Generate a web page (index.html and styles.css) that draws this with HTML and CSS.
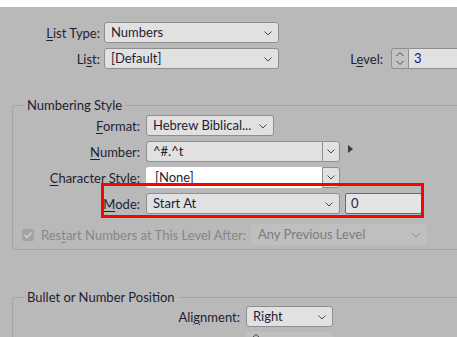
FILE: index.html
```html
<!DOCTYPE html>
<html lang="en">
<head>
  <meta charset="UTF-8">
  <title>Bullets and Numbering</title>
  <link rel="stylesheet" href="styles.css">
</head>
<body>
  <div class="topbar"></div>
  <div class="dialog">
    <div class="row first">
      <span class="lbl top-lbl"><u>L</u>ist Type:</span>
      <div class="select list-sel">Numbers
        <svg class="chev" width="8" height="5" viewBox="0 0 8 5"><polyline points="0.5,0.5 4,4 7.5,0.5"/></svg>
      </div>
    </div>
    <div class="row">
      <span class="lbl top-lbl">Li<u>s</u>t:</span>
      <div class="select list-sel">[Default]
        <svg class="chev" width="8" height="5" viewBox="0 0 8 5"><polyline points="0.5,0.5 4,4 7.5,0.5"/></svg>
      </div>
      <span class="lbl level-lbl">L<u>e</u>vel:</span>
      <div class="spin">
        <svg width="10" height="17" viewBox="0 0 10 17"><polyline points="1.5,6 5,2.5 8.5,6"/><polyline points="1.5,11 5,14.5 8.5,11"/></svg>
      </div>
      <div class="field level-field">3</div>
    </div>

    <fieldset class="group numbering">
      <legend>Numbering Style</legend>
      <div class="row">
        <span class="lbl ns-lbl"><u>F</u>ormat:</span>
        <div class="select format-sel">Hebrew Biblical...
          <svg class="chev" width="8" height="5" viewBox="0 0 8 5"><polyline points="0.5,0.5 4,4 7.5,0.5"/></svg>
        </div>
      </div>
      <div class="row">
        <span class="lbl ns-lbl"><u>N</u>umber:</span>
        <div class="combo">
          <div class="combo-text">^#.^t</div>
          <div class="combo-btn"><svg width="8" height="5" viewBox="0 0 8 5"><polyline points="0.5,0.5 4,4 7.5,0.5"/></svg></div>
        </div>
        <svg class="flyout" width="5" height="8" viewBox="0 0 5 8"><polygon points="0,0 5,4 0,8"/></svg>
      </div>
      <div class="row">
        <span class="lbl ns-lbl"><u>C</u>haracter Style:</span>
        <div class="combo">
          <div class="combo-text white">[None]</div>
          <div class="combo-btn"><svg width="8" height="5" viewBox="0 0 8 5"><polyline points="0.5,0.5 4,4 7.5,0.5"/></svg></div>
        </div>
      </div>
      <div class="row">
        <span class="lbl ns-lbl"><u>M</u>ode:</span>
        <div class="select mode-sel">Start At
          <svg class="chev" width="8" height="5" viewBox="0 0 8 5"><polyline points="0.5,0.5 4,4 7.5,0.5"/></svg>
        </div>
        <div class="field start-field">0</div>
      </div>
      <div class="row restart">
        <span class="check">
          <svg width="12" height="12" viewBox="0 0 12 12"><polyline points="2.5,6 5,8.5 9.5,3.5"/></svg>
        </span>
        <span class="dis-lbl">Res<u>t</u>art Numbers at This Level After:</span>
        <div class="select dis-sel">Any Previous Level
          <svg class="chev" width="8" height="5" viewBox="0 0 8 5"><polyline points="0.5,0.5 4,4 7.5,0.5"/></svg>
        </div>
      </div>
    </fieldset>

    <fieldset class="group position">
      <legend>Bullet or Number Position</legend>
      <div class="row">
        <span class="lbl pos-lbl">Ali<u>g</u>nment:</span>
        <div class="select align-sel">Right
          <svg class="chev" width="8" height="5" viewBox="0 0 8 5"><polyline points="0.5,0.5 4,4 7.5,0.5"/></svg>
        </div>
      </div>
      <div class="row cut">
        <span class="lbl pos-lbl"></span>
        <div class="dis-spin">
          <svg width="10" height="5" viewBox="0 0 10 5"><polyline points="2,4 5,1.5 8,4"/></svg>
        </div>
      </div>
    </fieldset>

    <div class="highlight"></div>
  </div>
</body>
</html>
```

FILE: styles.css
```css
html, body {
  margin: 0;
  padding: 0;
}
body {
  width: 457px;
  height: 337px;
  overflow: hidden;
  background: #b9b9b9;
  font-family: "Lato", "Liberation Sans", sans-serif;
  font-size: 13px;
  color: #1e1e32;
}
.topbar {
  height: 7px;
  background: #fff;
}
.dialog {
  position: relative;
  padding-top: 15px;
}
.row {
  display: flex;
  align-items: center;
  height: 21px;
  margin-top: 5px;
}
.row.first {
  margin-top: 0;
}
.lbl {
  text-align: right;
  white-space: nowrap;
  flex: none;
}
u {
  text-decoration-thickness: 1px;
  text-underline-offset: 2px;
}
.top-lbl {
  width: 100px;
  margin-right: 4px;
}
.level-lbl {
  width: 104px;
  margin-right: 8px;
}
.ns-lbl {
  width: 127px;
  margin-right: 6px;
}
.pos-lbl {
  width: 227px;
  margin-right: 6px;
}

.select {
  position: relative;
  box-sizing: border-box;
  height: 21px;
  line-height: 19px;
  padding-left: 6px;
  background: #e1e1e1;
  border: 1px solid #8f8f8f;
  border-radius: 3px;
  white-space: nowrap;
  overflow: hidden;
  flex: none;
}
.chev {
  position: absolute;
  right: 6px;
  top: 8px;
}
.chev polyline, .combo-btn polyline, .spin polyline, .dis-spin polyline {
  fill: none;
  stroke: #4a4a4a;
  stroke-width: 1;
}
.list-sel { width: 175px; }
.format-sel { width: 128px; }
.mode-sel { width: 194px; }
.align-sel { width: 87px; }

.spin {
  box-sizing: border-box;
  width: 18px;
  height: 21px;
  border: 1px solid #8f8f8f;
  border-radius: 3px 0 0 3px;
  background: #c4c4c4;
  display: flex;
  align-items: center;
  justify-content: center;
  flex: none;
}
.field {
  box-sizing: border-box;
  height: 21px;
  line-height: 19px;
  padding-left: 5px;
  background: #e1e1e1;
  border: 1px solid #8f8f8f;
  flex: none;
}
.level-field {
  flex: 1;
  border-left: none;
  border-right: none;
  color: #10108a;
}
.start-field {
  width: 77px;
  margin-left: 5px;
  border-color: #3a72c8;
  border-radius: 2px;
  background: #e4e4e4;
}

.combo {
  display: flex;
  height: 21px;
  flex: none;
}
.combo-text {
  box-sizing: border-box;
  width: 176px;
  height: 21px;
  line-height: 19px;
  padding-left: 6px;
  background: #e1e1e1;
  border: 1px solid #8f8f8f;
  border-right: none;
  border-radius: 3px 0 0 3px;
}
.combo-text.white {
  background: #fff;
  border-color: #fff;
  padding-left: 8px;
}
.combo-btn {
  box-sizing: border-box;
  width: 18px;
  height: 21px;
  background: #e1e1e1;
  border: 1px solid #8f8f8f;
  border-radius: 0 3px 3px 0;
  display: flex;
  align-items: center;
  justify-content: center;
}
.flyout {
  margin-left: 8px;
  margin-top: -5px;
  fill: #3a3a3a;
}

.group {
  margin: 0 0 0 12px;
  padding: 0;
  border: 1px solid #a3a3a3;
  border-right: none;
  border-radius: 4px 0 0 4px;
  min-width: 0;
}
.group legend {
  margin-left: 10px;
  padding: 0 4px;
  line-height: 16px;
}
.numbering {
  margin-top: 28px;
  padding: 2px 0 4px;
}
.numbering .row:first-of-type {
  margin-top: 0;
}
.position {
  margin-top: 39px;
  padding: 1px 0 0;
  border-bottom: none;
  border-radius: 4px 0 0 0;
}
.position .row:first-of-type {
  margin-top: 0;
}
.row.cut {
  height: 5px;
  align-items: flex-start;
  overflow: hidden;
}

.restart {
  margin-top: 10px;
}
.check {
  box-sizing: border-box;
  width: 12px;
  height: 12px;
  margin-left: 9px;
  margin-right: 7px;
  border-radius: 2px;
  background: #a2a2a2;
  display: flex;
  flex: none;
}
.check polyline {
  fill: none;
  stroke: #cfcfcf;
  stroke-width: 1.6;
}
.dis-lbl {
  color: #878787;
  white-space: nowrap;
  width: 210px;
  flex: none;
}
.dis-sel {
  width: 176px;
  background: #bfbfbf;
  border-color: #bfbfbf;
  color: #7c7c7c;
}
.dis-sel .chev polyline {
  stroke: #8a8a8a;
}
.dis-spin {
  box-sizing: border-box;
  width: 87px;
  height: 21px;
  background: #c0c0c0;
  border-radius: 3px;
  padding: 1px 0 0 5px;
  display: flex;
  align-items: flex-start;
}

.highlight {
  position: absolute;
  left: 101px;
  top: 176px;
  width: 323px;
  height: 35px;
  box-sizing: border-box;
  border: 3px solid #ff0000;
  pointer-events: none;
}
```
